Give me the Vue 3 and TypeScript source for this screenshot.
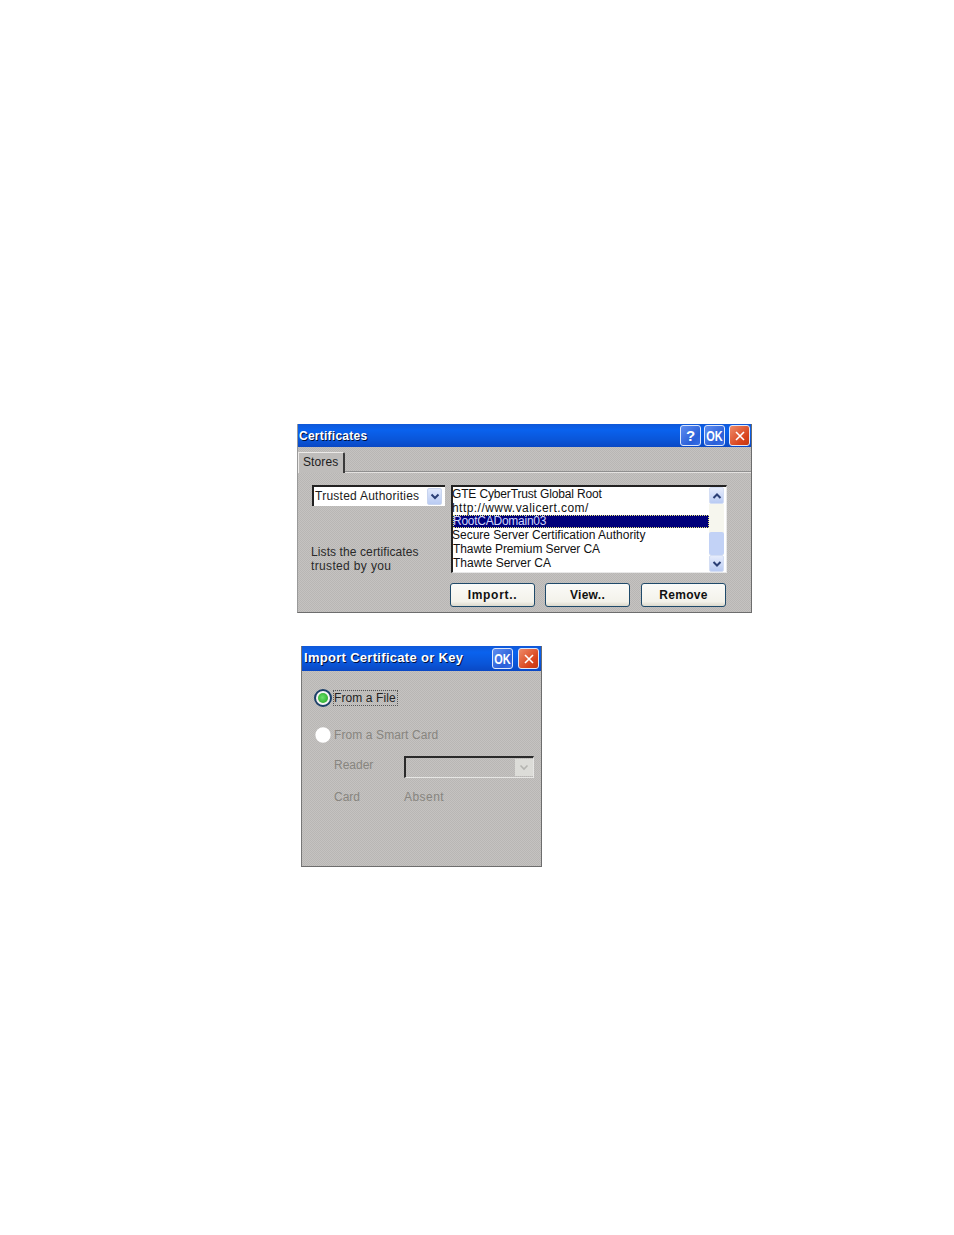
<script setup lang="ts">
const rows = [
  { text: 'GTE CyberTrust Global Root', selected: false },
  { text: 'http://www.valicert.com/', selected: false },
  { text: 'RootCADomain03', selected: true },
  { text: 'Secure Server Certification Authority', selected: false },
  { text: 'Thawte Premium Server CA', selected: false },
  { text: 'Thawte Server CA', selected: false },
]
const actions = ['Import..', 'View..', 'Remove']
</script>

<template>
  <main class="page">
    <section class="window first">
      <header class="titlebar">
        <h1>Certificates</h1>
        <div class="caption">
          <span class="cap blue">?</span>
          <span class="cap blue ok"><span class="ok-text">OK</span></span>
          <span class="cap red">
            <svg viewBox="0 0 12 12" width="12" height="12"><path d="M2 2 10 10M10 2 2 10" stroke="#fff" stroke-width="1.6" fill="none" /></svg>
          </span>
        </div>
      </header>
      <div class="tabs"><span class="tab">Stores</span></div>
      <div class="content">
        <div class="left">
          <div class="combo">
            <span>Trusted Authorities</span>
            <span class="arrow">
              <svg viewBox="0 0 10 8" width="10" height="8"><path d="M1.5 1.5 5 5l3.5-3.5" stroke="#2b3f75" stroke-width="2" fill="none" /></svg>
            </span>
          </div>
          <p class="hint">Lists the certificates<br /><span class="hint-two">trusted by you</span></p>
        </div>
        <div class="right">
          <div class="listbox">
            <ul>
              <li v-for="row in rows" :key="row.text" :class="{ selected: row.selected }">{{ row.text }}</li>
            </ul>
            <div class="scrollbar">
              <span class="sb-btn">
                <svg viewBox="0 0 10 8" width="10" height="8"><path d="M1.5 6 5 2.5 8.5 6" stroke="#2b3f75" stroke-width="2" fill="none" /></svg>
              </span>
              <span class="sb-track"><span class="sb-thumb"></span></span>
              <span class="sb-btn">
                <svg viewBox="0 0 10 8" width="10" height="8"><path d="M1.5 2 5 5.5 8.5 2" stroke="#2b3f75" stroke-width="2" fill="none" /></svg>
              </span>
            </div>
          </div>
          <div class="actions">
            <button v-for="a in actions" :key="a" type="button">{{ a }}</button>
          </div>
        </div>
      </div>
    </section>

    <section class="window second">
      <header class="titlebar tall">
        <h1 class="indent">Import Certificate or Key</h1>
        <div class="caption wide">
          <span class="cap blue ok"><span class="ok-text">OK</span></span>
          <span class="cap red">
            <svg viewBox="0 0 12 12" width="12" height="12"><path d="M2 2 10 10M10 2 2 10" stroke="#fff" stroke-width="1.6" fill="none" /></svg>
          </span>
        </div>
      </header>
      <div class="form">
        <div class="radio-row">
          <span class="radio on"><span class="dot"></span></span>
          <span class="focus">From a File</span>
        </div>
        <div class="radio-row muted two">
          <span class="radio off"></span>
          <span>From a Smart Card</span>
        </div>
        <div class="field muted">
          <span class="label">Reader</span>
          <div class="combo2">
            <span class="arrow2">
              <svg viewBox="0 0 10 8" width="10" height="8"><path d="M1.5 1.5 5 5l3.5-3.5" stroke="#b4b4b0" stroke-width="1.6" fill="none" /></svg>
            </span>
          </div>
        </div>
        <div class="field muted card">
          <span class="label">Card</span>
          <span class="absent">Absent</span>
        </div>
      </div>
    </section>
  </main>
</template>

<style>
html, body { margin: 0; background: #fff; }
</style>

<style scoped>
.page {
  width: 954px;
  height: 1235px;
  box-sizing: border-box;
  padding: 424px 0 0 297px;
  font-family: "Liberation Sans", Arial, sans-serif;
  font-size: 12px;
  letter-spacing: 0.1px;
  color: #1c1c1c;
  overflow: hidden;
}
.window {
  box-sizing: border-box;
  background-color: #bfbdbb;
  background-image: conic-gradient(rgba(255,255,255,.09) 25%, rgba(0,0,0,.04) 0 50%, rgba(255,255,255,.09) 0 75%, rgba(0,0,0,.04) 0);
  background-size: 2px 2px;
  border: 1px solid #6d6d6d;
  border-top: 0;
  border-left-color: #9a9a9a;
}
.first { width: 455px; height: 189px; }
.second { width: 241px; height: 221px; margin: 33px 0 0 4px; border-left-color: #777; }
.titlebar {
  height: 23px;
  display: flex;
  align-items: center;
  justify-content: space-between;
  background: linear-gradient(180deg, #1058d8 0%, #0a62ee 25%, #0a55d8 70%, #0a48c4 100%);
}
.titlebar.tall { height: 25px; }
h1 {
  margin: 0;
  padding-left: 1px;
  font-size: 12px;
  font-weight: 700;
  letter-spacing: 0.25px;
  color: #fff;
  text-shadow: 1px 1px 0 #00103c;
}
h1.indent { padding: 0 0 2px 2px; font-size: 13px; letter-spacing: 0.3px; }
.caption { display: flex; gap: 3px; padding-right: 1px; }
.caption.wide { gap: 5px; padding-right: 2px; }
.first .red { margin-left: 1px; }
.cap {
  width: 21px;
  height: 21px;
  box-sizing: border-box;
  display: flex;
  align-items: center;
  justify-content: center;
  border: 1px solid #dfe8fa;
  border-radius: 3px;
  color: #fff;
  font-weight: 700;
  font-size: 15px;
  letter-spacing: 0;
  line-height: 1;
}
.blue { background: linear-gradient(135deg, #5f8df0, #2a5fd8 70%, #3a70e8); }
.ok { font-size: 14px; }
.ok-text { display: inline-block; transform: scaleX(.78); }
.red { background: linear-gradient(135deg, #ee8a68, #d8431c 70%, #c43810); }
.tabs {
  height: 26px;
  box-sizing: border-box;
  display: flex;
  align-items: flex-end;
  border-bottom: 1px solid #e4e2e0;
  box-shadow: inset 0 -1px 0 #8f8f8f;
}
.tab {
  box-sizing: border-box;
  width: 47px;
  height: 21px;
  margin-bottom: -1px;
  padding-left: 4px;
  line-height: 19px;
  border-top: 1px solid #eceae8;
  border-left: 1px solid #eceae8;
  border-right: 2px solid #3a3a3a;
  border-top-right-radius: 2px;
  background: #bfbdbb;
}
.content {
  display: flex;
  padding-top: 12px;
}
.left { width: 153px; padding-left: 14px; box-sizing: border-box; }
.combo {
  width: 133px;
  height: 21px;
  box-sizing: border-box;
  display: flex;
  align-items: center;
  justify-content: space-between;
  padding: 0 1px 2px 1px;
  background: #fff;
  border-top: 2px solid #222;
  border-left: 2px solid #222;
  letter-spacing: 0.25px;
  white-space: nowrap;
}
.arrow {
  width: 15px;
  height: 17px;
  margin: 0 2px -2px 0;
  display: flex;
  align-items: center;
  justify-content: center;
  background: linear-gradient(180deg, #e0e8fb, #b9cbf3);
  border-radius: 2px;
  border: 1px solid #c8d4ee;
  box-sizing: border-box;
}
.hint {
  margin: 39px 0 0 -1px;
  line-height: 14px;
  color: #2a2a2a;
}
.hint-two { letter-spacing: 0.35px; }
.right { width: 277px; }
.listbox {
  width: 276px;
  height: 88px;
  box-sizing: border-box;
  display: flex;
  justify-content: space-between;
  background: #fff;
  border-top: 2px solid #222;
  border-left: 2px solid #222;
  border-right: 1px solid #e8e8e8;
  border-bottom: 1px solid #e8e8e8;
  overflow: hidden;
}
ul {
  list-style: none;
  margin: 0;
  padding: 0;
  width: 256px;
}
li {
  height: 13.8px;
  line-height: 13.8px;
  white-space: nowrap;
  letter-spacing: 0;
  color: #111;
  position: relative;
  top: 1px;
}
li:nth-child(1) { letter-spacing: -0.15px; left: -1px; }
li:nth-child(2) { letter-spacing: 0.45px; left: -1px; }
li:nth-child(3) { letter-spacing: -0.25px; }
li:nth-child(4) { left: -1px; }
li:nth-child(5) { letter-spacing: -0.1px; }
li.selected { background: #00007a; color: #cfd6ff; outline: 1px dotted #e8e87a; outline-offset: -1px; top: 0; }
.scrollbar {
  width: 17px;
  display: flex;
  flex-direction: column;
}
.sb-btn {
  height: 17px;
  display: flex;
  align-items: center;
  justify-content: center;
  background: linear-gradient(180deg, #e6ecfc, #b9cbf3);
  border: 1px solid #d4def4;
  border-radius: 2px;
  box-sizing: border-box;
  width: 15px;
}
.sb-track {
  flex: 1;
  width: 15px;
  display: flex;
  align-items: flex-end;
  background: #f6f6ee;
}
.sb-thumb {
  display: block;
  width: 100%;
  height: 23px;
  background: #c2d2f6;
  border-radius: 2px;
}
.actions {
  display: flex;
  gap: 10px;
  margin: 10px 0 0 -1px;
}
button {
  width: 85px;
  height: 24px;
  padding: 0;
  font: 700 12px "Liberation Sans", Arial, sans-serif;
  letter-spacing: 0.3px;
  color: #111;
  background: linear-gradient(180deg, #fbfbf8, #f3f2ea 80%, #dcd9cc);
  border: 1px solid #1f4a6a;
  border-radius: 3px;
}
button:first-child { letter-spacing: 0.7px; }
button:last-child { margin-left: 1px; }
.form { padding: 18px 0 0 12px; }
.radio-row { display: flex; align-items: center; gap: 2px; height: 17px; }
.radio-row.two { margin-top: 20px; }
.radio {
  width: 18px;
  height: 18px;
  box-sizing: border-box;
  border-radius: 50%;
  flex: none;
  display: flex;
  align-items: center;
  justify-content: center;
}
.radio.on { background: #f4f4f4; border: 2px solid #1c3f68; }
.dot {
  width: 10px;
  height: 10px;
  border-radius: 50%;
  background: radial-gradient(circle at 45% 45%, #6ce06c, #1ba01b);
}
.radio.off { background: #fff; transform: scale(.85); }
.focus { outline: 1px dotted #555; padding: 0 1px 0 0; color: #222; }
.muted { color: #87857f; }
.field {
  display: flex;
  align-items: center;
  margin: 11px 0 0 20px;
  height: 22px;
}
.field.card { margin-top: 11px; height: 20px; }
.label { width: 70px; flex: none; letter-spacing: 0; }
.absent { letter-spacing: 0.45px; }
.combo2 {
  width: 130px;
  height: 22px;
  margin-top: 4px;
  box-sizing: border-box;
  display: flex;
  justify-content: flex-end;
  align-items: center;
  border-top: 2px solid #2a2a2a;
  border-left: 2px solid #2a2a2a;
  border-bottom: 1px solid #e6e6e4;
  border-right: 1px solid #e6e6e4;
}
.arrow2 {
  width: 18px;
  height: 17px;
  display: flex;
  align-items: center;
  justify-content: center;
  background: #dcdcd8;
}
</style>
